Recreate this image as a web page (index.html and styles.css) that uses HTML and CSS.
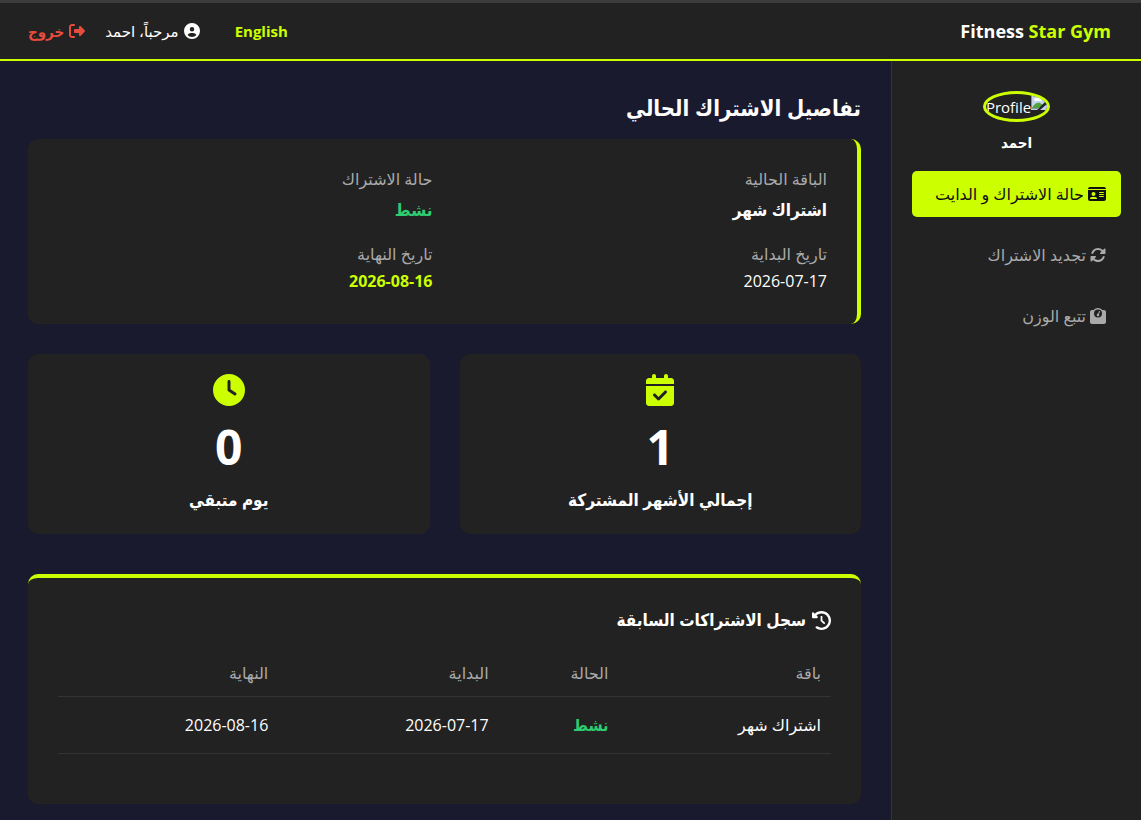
FILE: index.html
```
<!DOCTYPE html>
<html lang="ar" dir="rtl">
  <head>
    <meta charset="utf-8" />
    <meta name="viewport" content="width=device-width, initial-scale=1" />
    <title>Fitness Star Gym</title>
    <link rel="stylesheet" href="styles.css">
  </head>
  <body>
    <header class="navbar">
      <a href="#" class="logo" dir="ltr">Fitness <span>Star Gym</span></a>
      <div class="nav-actions">
        <a href="#" class="lang">English</a>
        <span class="user">
          <svg class="icon" viewBox="0 0 512 512"><path d="M399 384.2C376.9 345.8 335.4 320 288 320H224c-47.4 0-88.9 25.8-111 64.2c35.2 39.2 86.2 63.8 143 63.8s107.8-24.7 143-63.8zM0 256a256 256 0 1 1 512 0A256 256 0 1 1 0 256zm256 16a72 72 0 1 0 0-144 72 72 0 1 0 0 144z"/></svg>
          مرحباً، احمد
        </span>
        <a href="#" class="logout">
          <svg class="icon" viewBox="0 0 512 512"><path d="M377.9 105.9L500.7 228.7c7.2 7.2 11.3 17.1 11.3 27.3s-4.1 20.1-11.3 27.3L377.9 406.1c-6.4 6.4-15 9.9-24 9.9c-18.7 0-33.9-15.2-33.9-33.9l0-62.1-128 0c-17.7 0-32-14.3-32-32l0-64c0-17.7 14.3-32 32-32l128 0 0-62.1c0-18.7 15.2-33.9 33.9-33.9c9 0 17.6 3.6 24 9.9zM160 96L96 96c-17.7 0-32 14.3-32 32l0 256c0 17.7 14.3 32 32 32l64 0c17.7 0 32 14.3 32 32s-14.3 32-32 32l-64 0c-53 0-96-43-96-96L0 128C0 75 43 32 96 32l64 0c17.7 0 32 14.3 32 32s-14.3 32-32 32z"/></svg>
          خروج
        </a>
      </div>
    </header>

    <div class="dashboard">
      <aside class="sidebar">
        <div class="profile">
          <div class="avatar">
            <svg class="avatar-img" viewBox="0 0 16 16">
              <path fill="#c4d4ee" d="M0 0h11l5 5v11H0z"/>
              <path fill="#fff" d="M3 6a2 2 0 0 1 2-2 3 3 0 0 1 5 1 1 1 0 0 1 0 2H4z"/>
              <path fill="#4fa33d" d="M1 14c2-4 5-6 8-5l3 2-4 3z"/>
              <path fill="#222" d="M16 6v4L9 16H6z"/>
              <path fill="#8a9099" d="M11 0l5 5h-5zM0 0h1v15H0zM0 14h8v1H0z"/>
            </svg>
            <span>Profile</span>
          </div>
          <h4>احمد</h4>
        </div>
        <nav class="menu">
          <a href="#" class="active">
            <svg class="icon wide" viewBox="0 0 576 512"><path d="M0 96l576 0c0-35.3-28.7-64-64-64H64C28.7 32 0 60.7 0 96zm0 32V416c0 35.3 28.7 64 64 64H512c35.3 0 64-28.7 64-64V128H0zM64 405.3c0-29.5 23.9-53.3 53.3-53.3H234.7c29.5 0 53.3 23.9 53.3 53.3c0 5.9-4.8 10.7-10.7 10.7H74.7c-5.9 0-10.7-4.8-10.7-10.7zM176 192a64 64 0 1 1 0 128 64 64 0 1 1 0-128zm176 16c0-8.8 7.2-16 16-16H496c8.8 0 16 7.2 16 16s-7.2 16-16 16H368c-8.8 0-16-7.2-16-16zm0 64c0-8.8 7.2-16 16-16H496c8.8 0 16 7.2 16 16s-7.2 16-16 16H368c-8.8 0-16-7.2-16-16zm0 64c0-8.8 7.2-16 16-16H496c8.8 0 16 7.2 16 16s-7.2 16-16 16H368c-8.8 0-16-7.2-16-16z"/></svg>
            حالة الاشتراك و الدايت
          </a>
          <a href="#">
            <svg class="icon" viewBox="0 0 512 512"><path d="M142.9 142.9c62.2-62.2 162.7-62.5 225.3-1L327 183c-6.9 6.9-8.9 17.2-5.2 26.2s12.5 14.8 22.2 14.8H472c13.3 0 24-10.7 24-24V72c0-9.7-5.8-18.5-14.8-22.2s-19.3-1.7-26.2 5.2L413.4 96.6c-87.6-86.5-228.7-86.2-315.8 1C73.2 122 55.6 150.7 44.8 181.4c-5.9 16.7 2.9 34.9 19.5 40.8s34.9-2.9 40.8-19.5c7.7-21.8 20.2-42.3 37.8-59.8zM16 312V440c0 9.7 5.8 18.5 14.8 22.2s19.3 1.7 26.2-5.2l41.6-41.6c87.6 86.5 228.7 86.2 315.8-1c24.4-24.4 42.1-53.1 52.9-83.7c5.9-16.7-2.9-34.9-19.5-40.8s-34.9 2.9-40.8 19.5c-7.7 21.8-20.2 42.3-37.8 59.8c-62.2 62.2-162.7 62.5-225.3 1L185 329c6.9-6.9 8.9-17.2 5.2-26.2s-12.5-14.8-22.2-14.8H40c-13.3 0-24 10.7-24 24z"/></svg>
            تجديد الاشتراك
          </a>
          <a href="#">
            <svg class="icon" viewBox="0 0 512 512"><path d="M128 176a128 128 0 1 1 256 0 128 128 0 1 1 -256 0zM391.8 64C359.5 24.9 310.7 0 256 0S152.5 24.9 120.2 64H64C28.7 64 0 92.7 0 128V448c0 35.3 28.7 64 64 64H448c35.3 0 64-28.7 64-64V128c0-35.3-28.7-64-64-64H391.8zM296 224c0-10.6-4.1-20.2-10.9-27.4l33.6-78.3c3.5-8.1-.3-17.5-8.4-21s-17.5 .3-21 8.4L255.7 184c-22 .1-39.7 17.9-39.7 40c0 22.1 17.9 40 40 40s40-17.9 40-40z"/></svg>
            تتبع الوزن
          </a>
        </nav>
      </aside>

      <main class="content">
        <h2>تفاصيل الاشتراك الحالي</h2>

        <section class="card details">
          <div>
            <p class="label">الباقة الحالية</p>
            <h3>اشتراك شهر</h3>
          </div>
          <div>
            <p class="label">حالة الاشتراك</p>
            <h3 class="green">نشط</h3>
          </div>
          <div>
            <p class="label">تاريخ البداية</p>
            <p>2026-07-17</p>
          </div>
          <div>
            <p class="label">تاريخ النهاية</p>
            <p class="end-date">2026-08-16</p>
          </div>
        </section>

        <section class="stats">
          <div class="card stat">
            <svg viewBox="0 0 448 512"><path d="M128 0c17.7 0 32 14.3 32 32V64H288V32c0-17.7 14.3-32 32-32s32 14.3 32 32V64h48c26.5 0 48 21.5 48 48v48H0V112C0 85.5 21.5 64 48 64H96V32c0-17.7 14.3-32 32-32zM0 192H448V464c0 26.5-21.5 48-48 48H48c-26.5 0-48-21.5-48-48V192zM329 305c9.4-9.4 9.4-24.6 0-33.9s-24.6-9.4-33.9 0l-95 95-47-47c-9.4-9.4-24.6-9.4-33.9 0s-9.4 24.6 0 33.9l64 64c9.4 9.4 24.6 9.4 33.9 0L329 305z"/></svg>
            <div class="number">1</div>
            <h3>إجمالي الأشهر المشتركة</h3>
          </div>
          <div class="card stat">
            <svg viewBox="0 0 512 512"><path d="M256 0a256 256 0 1 1 0 512A256 256 0 1 1 256 0zM232 120V256c0 8 4 15.5 10.7 20l96 64c11 7.4 25.9 4.4 33.3-6.7s4.4-25.9-6.7-33.3L280 243.2V120c0-13.3-10.7-24-24-24s-24 10.7-24 24z"/></svg>
            <div class="number">0</div>
            <h3>يوم متبقي</h3>
          </div>
        </section>

        <section class="card history">
          <h3>
            <svg class="icon" viewBox="0 0 512 512"><path d="M75 75L41 41C25.9 25.9 0 36.6 0 57.9V168c0 13.3 10.7 24 24 24H134.1c21.4 0 32.1-25.9 17-41l-30.8-30.8C155 85.5 203 64 256 64c106 0 192 86 192 192s-86 192-192 192c-40.8 0-78.6-12.7-109.7-34.4c-14.5-10.1-34.4-6.6-44.6 7.9s-6.6 34.4 7.9 44.6C151.2 495 201.7 512 256 512c141.4 0 256-114.6 256-256S397.4 0 256 0C185.3 0 121.3 28.7 75 75zm181 53c-13.3 0-24 10.7-24 24V256c0 6.4 2.5 12.5 7 17l72 72c9.4 9.4 24.6 9.4 33.9 0s9.4-24.6 0-33.9l-65-65V152c0-13.3-10.7-24-24-24z"/></svg>
            سجل الاشتراكات السابقة
          </h3>
          <table>
            <thead>
              <tr>
                <th class="col-plan">باقة</th>
                <th class="col-status">الحالة</th>
                <th>البداية</th>
                <th>النهاية</th>
              </tr>
            </thead>
            <tbody>
              <tr>
                <td>اشتراك شهر</td>
                <td class="green status">نشط</td>
                <td>2026-07-17</td>
                <td>2026-08-16</td>
              </tr>
            </tbody>
          </table>
        </section>
      </main>
    </div>
  </body>
</html>
```
FILE: styles.css
```
* {
  margin: 0;
  padding: 0;
  box-sizing: border-box;
}
body {
  min-height: 100vh;
  display: flex;
  flex-direction: column;
  background: #1a1a2e;
  color: #fff;
  font-family: "Open Sans", "DejaVu Sans", sans-serif;
  font-size: 16px;
  line-height: 21px;
  border-top: 3px solid #3c3c3c;
}
h2, h3, h4, .logout, .status {
  font-family: "Open Sans", "DejaVu Sans Condensed", "DejaVu Sans", sans-serif;
  font-weight: bold;
}
a {
  text-decoration: none;
}
.icon {
  width: 16px;
  height: 16px;
  fill: currentColor;
  flex-shrink: 0;
}
.icon.wide {
  width: 18px;
}
.green {
  color: #2ecc71;
}

/* Navbar */
.navbar {
  display: flex;
  justify-content: space-between;
  align-items: center;
  height: 58px;
  padding: 0 30px 0 28px;
  background: #222;
  border-bottom: 2px solid #ccff00;
}
.logo {
  color: #fff;
  font-size: 18px;
  font-weight: bold;
}
.logo span {
  color: #ccff00;
}
.nav-actions {
  display: flex;
  align-items: center;
  gap: 20px;
  font-size: 15px;
}
.lang {
  color: #ccff00;
  font-weight: bold;
  margin-left: 15px;
}
.user, .logout {
  display: flex;
  align-items: center;
  gap: 5px;
}
.logout {
  color: #e74c3c;
}

/* Sidebar */
.dashboard {
  display: flex;
  flex: 1;
}
.sidebar {
  width: 250px;
  flex-shrink: 0;
  padding: 30px 20px;
  background: #222;
  border-left: 1px solid #333;
}
.profile {
  text-align: center;
  margin-bottom: 18px;
}
.avatar {
  display: inline-flex;
  align-items: flex-start;
  height: 31px;
  border: 3px solid #ccff00;
  border-radius: 50%;
  overflow: hidden;
  font-size: 15px;
  line-height: 26px;
  vertical-align: top;
}
.avatar-img {
  width: 16px;
  height: 16px;
}
.profile h4 {
  font-size: 15px;
  margin-top: 10px;
}
.menu {
  display: flex;
  flex-direction: column;
  gap: 15px;
}
.menu a {
  display: flex;
  align-items: center;
  gap: 4px;
  height: 46px;
  padding: 0 15px;
  border-radius: 5px;
  color: #aaa;
  white-space: nowrap;
}
.menu a.active {
  background: #ccff00;
  color: #111;
}

/* Content */
.content {
  flex: 1;
  padding: 30px 30px 16px 28px;
}
.content h2 {
  font-size: 22px;
  line-height: 32px;
  margin-bottom: 16px;
}
.content h3 {
  font-size: 17px;
  line-height: 28px;
}
.card {
  background: #222;
  border-radius: 10px;
}
.details {
  display: grid;
  grid-template-columns: 1fr 1fr;
  gap: 20px;
  padding: 30px 30px 32px;
  border-right: 4px solid #ccff00;
  margin-bottom: 30px;
}
.label {
  color: #aaa;
  margin-bottom: 6px;
}
.end-date {
  color: #ccff00;
  font-weight: bold;
}
.stats {
  display: grid;
  grid-template-columns: 1fr 1fr;
  gap: 30px;
  margin-bottom: 40px;
}
.stat {
  padding: 20px;
  text-align: center;
}
.stat svg {
  display: block;
  height: 32px;
  margin: 0 auto 10px;
  fill: #ccff00;
}
.number {
  font-size: 48px;
  font-weight: bold;
  line-height: 62px;
  margin-bottom: 8px;
}

/* History */
.history {
  padding: 28px 30px 50px;
  border-top: 4px solid #ccff00;
}
.history h3 {
  display: flex;
  align-items: center;
  gap: 6px;
  margin-bottom: 17px;
}
.history h3 .icon {
  width: 19px;
  height: 19px;
}
table {
  width: 100%;
  table-layout: fixed;
  border-collapse: collapse;
}
th, td {
  text-align: right;
  border-bottom: 1px solid #333;
}
th {
  padding: 12px 10px;
  color: #aaa;
  font-weight: normal;
}
td {
  padding: 18px 10px 17px;
}
.col-plan {
  width: 27.5%;
}
.col-status {
  width: 15.5%;
}
```
